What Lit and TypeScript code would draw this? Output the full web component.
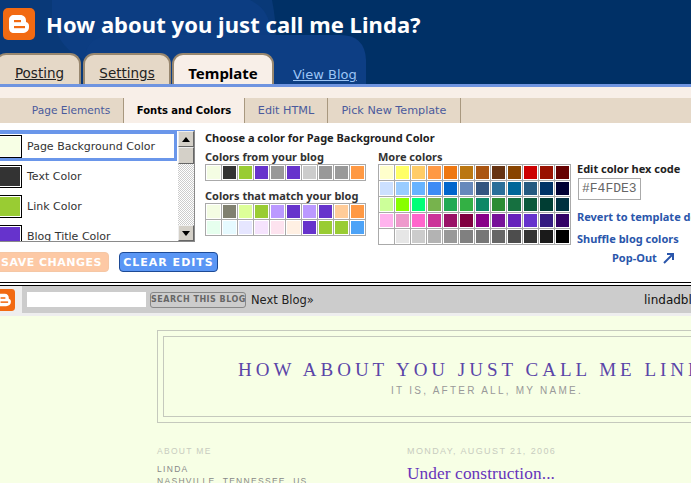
import { LitElement, html, css, svg } from "lit";
import { customElement } from "lit/decorators.js";

const fromBlog = ["f4fde3","333333","99cc33","6633cc","999999","6633cc","cccccc","999999","999999","ff9944"];
const match = ["f4fde3","808070","ddff99","99cc33","bb99ff","6633cc","bb99ff","6633cc","ffcc99","ff9944",
  "e6ffee","e6faff","e6e6ff","f5e3fd","fde3ef","fff0e3","6633cc","99cc33","99cc33","4da3f7"];
const more = ["ffffcc","ffff66","ffcc66","ff9944","ee7711","bb7711","aa5511","663311","884400","cc0000","991100","660000",
  "cce0ff","99ccff","66b3ff","3d8bf5","0066cc","6688bb","335580","2a6f99","006699","255a80","003366","000033",
  "ccff99","88ff00","00ff77","77b34d","22aa55","33b044","0d8866","2d8c33","167040","0d5a3c","003d33","003040",
  "ffb3ee","ee99cc","ff66cc","cc3399","991166","800040","880088","771199","6622bb","6633cc","331a80","330066",
  "ffffff","e6e6e6","cccccc","b3b3b3","999999","808080","777777","666666","4d4d4d","333333","1a1a1a","000000"];
const items: [string, string][] = [["Page Background Color","f7ffe5"],["Text Color","333333"],["Link Color","99cc33"],["Blog Title Color","6633cc"]];

const logo = (s: number) => html`<svg width=${s} height=${s} viewBox="0 0 32 32">
  <rect width="32" height="32" rx="5" fill="#f26a12"/>
  <path d="M11 7h6c4 0 6 2.500 6 6v1c2 .5 3 2 3 4v1c0 4-3 6-7 6h-8c-3 0-5-2-5-5v-8c0-3 2-5 5-5z" fill="#fff"/>
  <rect x="11" y="12" width="7" height="2.200" fill="#f26a12"/><rect x="11" y="18" width="11" height="2.200" fill="#f26a12"/>
</svg>`;

@customElement("app-root")
export class AppRoot extends LitElement {
  static styles = css`
    :host { display:block; width:691px; height:483px; overflow:hidden; position:relative; background:#fff;
      font-family:"DejaVu Sans",sans-serif; font-size:11px; color:#222; }
    a { color:inherit; }
    .header { position:relative; height:84px; background:#003066; overflow:hidden; }
    .deco { position:absolute; inset:0; }
    .top { position:relative; display:flex; align-items:center; gap:11px; padding:8px 0 0 3px; height:32px; }
    .top h1 { margin:0; font:bold 22px "Noto Sans",sans-serif; color:#fff; letter-spacing:.05px; white-space:nowrap; }
    .tabbar { position:relative; z-index:2; display:flex; align-items:flex-start; height:35px; margin-top:13px; }
    .strip { height:3px; background:#6f94e0; }
    .tab { box-sizing:border-box; height:35px; border:2px solid #98876f; border-bottom:0; border-radius:11px 11px 0 0;
      background:#e5d8c7; font:13.500px "DejaVu Sans",sans-serif; color:#222; display:flex; justify-content:center; padding-top:10px;
      text-decoration:underline; margin-right:2px; }
    .tab.p { width:86px; margin-left:-5px; padding-left:3px; }
    .tab.s { width:88px; }
    .tab.t { width:102px; margin-left:-1px; height:36px; background:#f8efe8; font-weight:bold; text-decoration:none; font-family:"Noto Sans",sans-serif; font-size:15px; color:#000; padding-top:8px; }
    .view { color:#9cc4f5; font-size:13px; margin:14px 0 0 17px; text-decoration:underline; }
    .cream { height:11px; background:#f8efe8; margin-top:0; }
    .subtabs { height:25px; background:#e5d8c7; display:flex; font-size:11.200px; color:#4a5a9c; line-height:25px; }
    .subtabs div { box-sizing:border-box; text-align:center; border-right:1px solid #a8987f; }
    .st1 { width:124px; padding-left:19px; font-size:10.600px; }
    .st2 { width:121px; background:#f8efe8; color:#000; font-weight:bold; font-size:10px; }
    .st3 { width:83px; }
    .st4 { width:133px; }
    .main { height:159px; display:flex; position:relative; white-space:nowrap; }
    .left { width:205px; flex:none; }
    .list { box-sizing:border-box; width:199px; height:112px; margin:7px 0 0 -4px; border:1px solid #8a8a8a; border-top-color:#6a96ea; display:flex; }
    .opts { flex:1; overflow:hidden; }
    .opt { box-sizing:border-box; height:30px; display:flex; align-items:center; gap:5px; font-size:11px; color:#333; padding-left:1px; }
    .opt.sel { border:3px solid #6a96ea; border-left:0; height:30px; margin-right:1px; padding-left:1px; }
    .sw { box-sizing:border-box; width:24px; height:23px; border:1px solid #000; box-shadow:inset 0 0 0 1px #fff; flex:none; }
    .sb { width:16px; background:repeating-conic-gradient(#ccc 0 25%, #fff 0 50%) 0 0/2px 2px; display:flex; flex-direction:column; justify-content:space-between; position:relative; }
    .sbtn { box-sizing:border-box; width:16px; height:16px; background:#d4d0c8; border:1px solid; border-color:#eee #666 #666 #eee; display:flex; align-items:center; justify-content:center; }
    .thumb { position:absolute; top:16px; left:0; box-sizing:border-box; width:16px; height:17px; background:#d4d0c8; border:1px solid; border-color:#eee #666 #666 #eee; }
    .btns { display:flex; gap:10px; margin:10px 0 0 -8px; }
    .btn { box-sizing:border-box; flex:none; height:20px; border-radius:4px; font:bold 11px "DejaVu Sans",sans-serif; letter-spacing:1px; color:#fff; display:flex; align-items:center; justify-content:center; }
    .save { width:117px; background:#fdc9a5; border:1px solid #f5c7a5; letter-spacing:.5px; padding-left:2px; }
    .clear { width:99px; background:#5a96f5; border:1px solid #1d4a95; }
    .center { width:372px; flex:none; padding-top:8px; }
    .choose { font:bold 11px "Noto Sans",sans-serif; height:13px; line-height:13px; }
    .cols { display:flex; margin-top:6px; }
    .c1 { width:173px; }
    .label { font:bold 11px "Noto Sans",sans-serif; line-height:13px; height:13px; color:#333; margin-bottom:1px; }
    .grid { display:grid; grid-auto-rows:16px; border-left:1px solid #aaa; border-top:1px solid #aaa; width:max-content; }
    .g10 { grid-template-columns:repeat(10,16px); }
    .g12 { grid-template-columns:repeat(12,16px); }
    .cell { box-sizing:border-box; border-right:1px solid #aaa; border-bottom:1px solid #aaa; box-shadow:inset 0 0 0 1px #fff; }
    .lab2 { margin-top:8px; }
    .right { flex:none; padding:39px 0 0 0; font:bold 11px "Noto Sans",sans-serif; }
    .right .h { height:13px; line-height:13px; }
    .hex { box-sizing:border-box; width:63px; height:22px; margin:3px 0 0 1px; border:1px solid #aaa; font:normal 13px "Liberation Mono",monospace; color:#666; line-height:20px; padding-left:3px; }
    .lnk { color:#2a56ab; height:13px; line-height:13px; }
    .l1 { margin-top:10px; }
    .l2 { margin-top:9px; }
    .pop { margin:6px 0 0 35px; display:flex; align-items:center; gap:6px; }
    .rule { height:1px; background:#000; }
    .rule2 { height:1px; background:#000; margin-top:2px; }
    .nav { height:27px; background:#ccc; display:flex; align-items:center; white-space:nowrap; position:relative; }
    .nl { width:22px; align-self:stretch; background:#eee; display:flex; align-items:center; flex:none; margin-right:5px; overflow:hidden; }
    .nl svg { margin-left:-7px; flex:none; }
    .inp { width:119px; height:15px; background:#fff; flex:none; }
    .go { box-sizing:border-box; width:96px; height:16px; margin-left:4px; border:1px solid #888; border-radius:3px; background:#ccc; font:bold 8px "DejaVu Sans",sans-serif; letter-spacing:.5px; color:#666; text-align:center; line-height:14px; flex:none; }
    .next { margin-left:5px; font-size:11.500px; color:#222; }
    .name { margin-left:auto; font-size:12px; color:#111; width:47px; overflow:hidden; }
    .nav2 { height:3px; background:#eee; }
    .blog { background:#f7ffe5; height:167px; padding:14px 0 0 157px; overflow:hidden; white-space:nowrap; }
    .frame { box-sizing:border-box; width:660px; height:93px; border:1px solid #c5c9bd; padding:5px; }
    .inner { box-sizing:border-box; height:100%; border:1px solid #c5c9bd; text-align:center; padding-top:23px; }
    .title { font:19px "Liberation Serif",serif; letter-spacing:4px; color:#5a45a8; line-height:20px; }
    .sub { font:10px "Liberation Sans",sans-serif; letter-spacing:2.250px; color:#999; line-height:12px; margin-top:5px; }
    .cols2 { display:flex; margin-top:22px; }
    .side { width:250px; flex:none; font:8.500px "Liberation Sans",sans-serif; letter-spacing:1.300px; color:#888; }
    .dim { color:#c8ccc0; line-height:12px; }
    .side .who { margin-top:6px; line-height:12px; }
    .date { font:9px "Liberation Sans",sans-serif; letter-spacing:1.400px; color:#c8ccc0; line-height:12px; }
    .post { font:17.300px "Liberation Serif",serif; color:#6633bb; margin-top:7px; line-height:20px; letter-spacing:.1px; }
  `;

  private cells(list: string[]) {
    return list.map((c) => html`<div class="cell" style="background:#${c}"></div>`);
  }

  render() {
    return html`
      <div class="header">
        <svg class="deco" width="691" height="84" viewBox="0 0 691 84">
          <rect width="691" height="84" fill="#003066"/>
          <path d="M0 0H272Q276 20 276 40V84H0Z" fill="#093978"/>
          <path d="M52 0H250Q270 10 270 30V84H85V60Q60 50 52 20Z" fill="#0c3d82"/>
          <path d="M85 84V60Q85 35 115 35H340Q365 35 366 60V84Z" fill="#0d3e84"/>
        </svg>
        <div class="top">${logo(32)}<h1>How about you just call me Linda?</h1></div>
        <div class="tabbar">
          <a class="tab p">Posting</a>
          <a class="tab s">Settings</a>
          <a class="tab t">Template</a>
          <a class="view">View Blog</a>
        </div>
      </div>
      <div class="strip"></div>
      <div class="cream"></div>
      <div class="subtabs">
        <div class="st1">Page Elements</div><div class="st2">Fonts and Colors</div><div class="st3">Edit HTML</div><div class="st4">Pick New Template</div>
      </div>
      <div class="main">
        <div class="left">
          <div class="list">
            <div class="opts">
              ${items.map(([n, c], i) => html`<div class="opt ${i === 0 ? "sel" : ""}"><span class="sw" style="background:#${c}"></span>${n}</div>`)}
            </div>
            <div class="sb">
              <div class="sbtn"><svg width="8" height="5"><path d="M4 0L8 5H0Z" fill="#000"/></svg></div>
              <div class="thumb"></div>
              <div class="sbtn"><svg width="8" height="5"><path d="M0 0H8L4 5Z" fill="#000"/></svg></div>
            </div>
          </div>
          <div class="btns">
            <div class="btn save">SAVE CHANGES</div>
            <div class="btn clear">CLEAR EDITS</div>
          </div>
        </div>
        <div class="center">
          <div class="choose">Choose a color for Page Background Color</div>
          <div class="cols">
            <div class="c1">
              <div class="label">Colors from your blog</div>
              <div class="grid g10">${this.cells(fromBlog)}</div>
              <div class="label lab2">Colors that match your blog</div>
              <div class="grid g10">${this.cells(match)}</div>
            </div>
            <div>
              <div class="label">More colors</div>
              <div class="grid g12">${this.cells(more)}</div>
            </div>
          </div>
        </div>
        <div class="right">
          <div class="h">Edit color hex code</div>
          <div class="hex">#F4FDE3</div>
          <div class="lnk l1">Revert to template defaults</div>
          <div class="lnk l2">Shuffle blog colors</div>
          <div class="lnk pop">Pop-Out
            <svg width="12" height="12" viewBox="0 0 12 12">${svg`<path d="M1 11L9 3M4 2H10V8" fill="none" stroke="#2a56ab" stroke-width="2"/>`}</svg>
          </div>
        </div>
      </div>
      <div class="rule"></div>
      <div class="rule2"></div>
      <div class="nav">
        <div class="nl">${logo(22)}</div>
        <div class="inp"></div>
        <div class="go">SEARCH THIS BLOG</div>
        <div class="next">Next Blog»</div>
        <div class="name">lindadblog</div>
      </div>
      <div class="nav2"></div>
      <div class="blog">
        <div class="frame"><div class="inner">
          <div class="title">HOW ABOUT YOU JUST CALL ME LINDA?</div>
          <div class="sub">IT IS, AFTER ALL, MY NAME.</div>
        </div></div>
        <div class="cols2">
          <div class="side">
            <div class="dim">ABOUT ME</div>
            <div class="who">LINDA<br>NASHVILLE, TENNESSEE, US</div>
          </div>
          <div>
            <div class="date">MONDAY, AUGUST 21, 2006</div>
            <div class="post">Under construction...</div>
          </div>
        </div>
      </div>
    `;
  }
}
